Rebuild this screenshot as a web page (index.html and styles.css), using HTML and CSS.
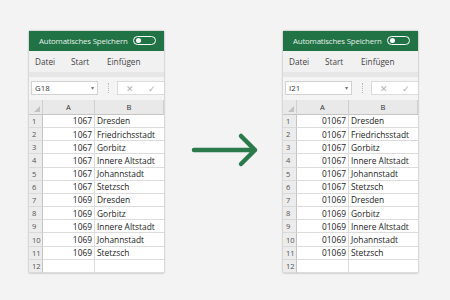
FILE: index.html
```html
<!DOCTYPE html>
<html lang="de">

<head>
    <meta charset="UTF-8">
    <meta name="viewport" content="width=device-width, initial-scale=1.0">
    <title>Postleitzahlen mit führender Null</title>

    <link rel="stylesheet" href="styles.css">
</head>

<body>

    <!-- vorher -->
    <div class="fenster">
        <div class="titel">
            <span>Automatisches Speichern</span>
            <span class="schalter"></span>
        </div>
        <div class="menue">
            <span>Datei</span>
            <span>Start</span>
            <span>Einfügen</span>
        </div>
        <div class="leiste"></div>
        <div class="formel">
            <div class="namensfeld"><span>G18</span><span class="pfeil">▾</span></div>
            <span class="trenner"></span>
            <div class="knoepfe"><span>✕</span><span>✓</span></div>
        </div>
        <div class="tabelle">
            <div class="kopf ecke"></div>
            <div class="kopf">A</div>
            <div class="kopf">B</div>

            <div class="nr">1</div><div class="zahl">1067</div><div class="ort">Dresden</div>
            <div class="nr">2</div><div class="zahl">1067</div><div class="ort">Friedrichsstadt</div>
            <div class="nr">3</div><div class="zahl">1067</div><div class="ort">Gorbitz</div>
            <div class="nr">4</div><div class="zahl">1067</div><div class="ort">Innere Altstadt</div>
            <div class="nr">5</div><div class="zahl">1067</div><div class="ort">Johannstadt</div>
            <div class="nr">6</div><div class="zahl">1067</div><div class="ort">Stetzsch</div>
            <div class="nr">7</div><div class="zahl">1069</div><div class="ort">Dresden</div>
            <div class="nr">8</div><div class="zahl">1069</div><div class="ort">Gorbitz</div>
            <div class="nr">9</div><div class="zahl">1069</div><div class="ort">Innere Altstadt</div>
            <div class="nr">10</div><div class="zahl">1069</div><div class="ort">Johannstadt</div>
            <div class="nr">11</div><div class="zahl">1069</div><div class="ort">Stetzsch</div>
            <div class="nr">12</div><div class="zahl"></div><div class="ort"></div>
        </div>
    </div>

    <div class="mitte">
        <svg width="119" height="242" viewBox="0 0 119 242">
            <path d="M30 119 H91 M77 105 L91 119 L77 133" fill="none" stroke="#2a7a4c" stroke-width="4.5"
                stroke-linecap="round" stroke-linejoin="round" />
        </svg>
    </div>

    <!-- nachher -->
    <div class="fenster">
        <div class="titel">
            <span>Automatisches Speichern</span>
            <span class="schalter"></span>
        </div>
        <div class="menue">
            <span>Datei</span>
            <span>Start</span>
            <span>Einfügen</span>
        </div>
        <div class="leiste"></div>
        <div class="formel">
            <div class="namensfeld"><span>I21</span><span class="pfeil">▾</span></div>
            <span class="trenner"></span>
            <div class="knoepfe"><span>✕</span><span>✓</span></div>
        </div>
        <div class="tabelle">
            <div class="kopf ecke"></div>
            <div class="kopf">A</div>
            <div class="kopf">B</div>

            <div class="nr">1</div><div class="zahl">01067</div><div class="ort">Dresden</div>
            <div class="nr">2</div><div class="zahl">01067</div><div class="ort">Friedrichsstadt</div>
            <div class="nr">3</div><div class="zahl">01067</div><div class="ort">Gorbitz</div>
            <div class="nr">4</div><div class="zahl">01067</div><div class="ort">Innere Altstadt</div>
            <div class="nr">5</div><div class="zahl">01067</div><div class="ort">Johannstadt</div>
            <div class="nr">6</div><div class="zahl">01067</div><div class="ort">Stetzsch</div>
            <div class="nr">7</div><div class="zahl">01069</div><div class="ort">Dresden</div>
            <div class="nr">8</div><div class="zahl">01069</div><div class="ort">Gorbitz</div>
            <div class="nr">9</div><div class="zahl">01069</div><div class="ort">Innere Altstadt</div>
            <div class="nr">10</div><div class="zahl">01069</div><div class="ort">Johannstadt</div>
            <div class="nr">11</div><div class="zahl">01069</div><div class="ort">Stetzsch</div>
            <div class="nr">12</div><div class="zahl"></div><div class="ort"></div>
        </div>
    </div>

</body>

</html>
```

FILE: styles.css
```css
* {
    margin: 0;
    padding: 0;
    box-sizing: border-box;
}

body {
    width: 450px;
    height: 300px;
    background-color: #f3f3f3;
    display: flex;
    align-items: flex-start;
    padding: 31px 0 0 29px;
    font-family: "Open Sans", "Noto Sans", sans-serif;
    overflow: hidden;
}

.fenster {
    width: 135px;
    height: 242px;
    background-color: #f5f5f5;
    box-shadow: 0 0 2px rgba(0, 0, 0, .35);
    display: flex;
    flex-direction: column;
    overflow: hidden;
}

.titel {
    height: 20px;
    background-color: #217346;
    color: #e4efe8;
    font-size: 7.8px;
    display: flex;
    align-items: center;
    justify-content: space-between;
    padding: 0 8px 0 10px;
    letter-spacing: -.15px;
}

.schalter {
    width: 23px;
    height: 9px;
    border: 1.2px solid #fff;
    border-radius: 5px;
    position: relative;
}

.schalter::before {
    content: "";
    position: absolute;
    left: 1.5px;
    top: 1px;
    width: 5px;
    height: 5px;
    border-radius: 50%;
    background-color: #fff;
}

.menue {
    height: 21px;
    background-color: #f1f1f1;
    display: flex;
    align-items: center;
    padding-left: 6px;
    font-size: 8.2px;
    color: #444;
}

.menue span {
    width: 36px;
}

.leiste {
    height: 5px;
    background-color: #e6e6e6;
}

.formel {
    height: 23px;
    display: flex;
    align-items: center;
    padding-left: 2px;
    background-color: #f4f4f4;
}

.namensfeld {
    width: 67px;
    height: 14px;
    background-color: #fff;
    border: 1px solid #d2d2d2;
    display: flex;
    align-items: center;
    justify-content: space-between;
    padding: 0 3px;
    font-size: 7.8px;
    color: #333;
}

.pfeil {
    font-size: 5.5px;
    color: #777;
}

.trenner {
    width: 0;
    height: 10px;
    border-left: 1px dotted #bbb;
    margin: 0 8px 0 10px;
}

.knoepfe {
    flex: 1;
    height: 14px;
    background-color: #fff;
    border: 1px solid #dcdcdc;
    border-right: none;
    display: flex;
    align-items: center;
    gap: 14px;
    padding-left: 8px;
    font-size: 9px;
    color: #b0b0b0;
}

.tabelle {
    flex: 1;
    display: grid;
    grid-template-columns: 14px 52px 1fr;
    grid-template-rows: 15px repeat(12, 13.2px);
    font-size: 8.4px;
    color: #222;
    background-color: #fff;
}

.kopf {
    background-color: #e9e9e9;
    border-right: 1px solid #d0d0d0;
    border-bottom: 1px solid #c4c4c4;
    display: flex;
    align-items: center;
    justify-content: center;
    font-size: 7.6px;
    color: #333;
}

.ecke {
    position: relative;
}

.ecke::after {
    content: "";
    position: absolute;
    right: 2px;
    bottom: 2px;
    border-left: 6px solid transparent;
    border-bottom: 6px solid #c2c2c2;
}

.nr {
    background-color: #ececec;
    border-right: 1px solid #c4c4c4;
    border-bottom: 1px solid #dadada;
    display: flex;
    align-items: center;
    padding-left: 3px;
    font-size: 7.6px;
    color: #555;
}

.zahl,
.ort {
    border-right: 1px solid #dcdcdc;
    border-bottom: 1px solid #dcdcdc;
    display: flex;
    align-items: center;
    white-space: nowrap;
}

.zahl {
    justify-content: flex-end;
    padding-right: 2px;
}

.ort {
    padding-left: 2px;
    border-right: none;
}

.mitte {
    width: 119px;
    height: 242px;
}
```
